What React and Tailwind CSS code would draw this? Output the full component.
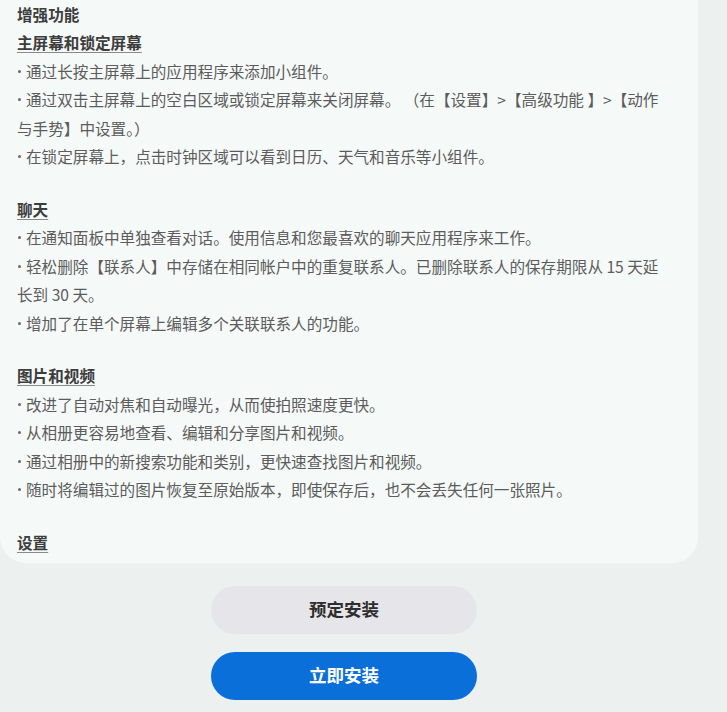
import React from "react";

const sections = [
  {
    title: "主屏幕和锁定屏幕",
    items: [
      ["通过长按主屏幕上的应用程序来添加小组件。"],
      ["通过双击主屏幕上的空白区域或锁定屏幕来关闭屏幕。 （在【设置】>【高级功能 】>【动作", "与手势】中设置。）"],
      ["在锁定屏幕上，点击时钟区域可以看到日历、天气和音乐等小组件。"],
    ],
  },
  {
    title: "聊天",
    items: [
      ["在通知面板中单独查看对话。使用信息和您最喜欢的聊天应用程序来工作。"],
      ["轻松删除【联系人】中存储在相同帐户中的重复联系人。已删除联系人的保存期限从 15 天延", "长到 30 天。"],
      ["增加了在单个屏幕上编辑多个关联联系人的功能。"],
    ],
  },
  {
    title: "图片和视频",
    items: [
      ["改进了自动对焦和自动曝光，从而使拍照速度更快。"],
      ["从相册更容易地查看、编辑和分享图片和视频。"],
      ["通过相册中的新搜索功能和类别，更快速查找图片和视频。"],
      ["随时将编辑过的图片恢复至原始版本，即使保存后，也不会丢失任何一张照片。"],
    ],
  },
];

const Heading = ({ children }) => (
  <div className="h-[28.5px] flex items-center">
    <span className="text-[15.6px] font-bold text-[#3d3d3d] underline underline-offset-[3px] decoration-[#8a8a8a]">
      {children}
    </span>
  </div>
);

export default function App() {
  return (
    <div
      className="w-[727px] h-[712px] overflow-hidden bg-[#ecf1f0]"
      style={{ fontFamily: '"Noto Sans CJK SC", "Noto Sans", sans-serif' }}
    >
      {/* Release notes card */}
      <div className="w-[698px] bg-[#f5f9f8] rounded-b-[26px] pl-[17px] pr-3 pt-0 pb-[6px]">
        <div className="h-[28.5px] flex items-center text-[15.6px] font-bold text-[#3d3d3d]">
          增强功能
        </div>
        {sections.map((s) => (
          <div key={s.title} className="mb-[24px]">
            <Heading>{s.title}</Heading>
            {s.items.map((lines, j) =>
              lines.map((line, k) => (
                <div
                  key={j + "-" + k}
                  className="h-[28.5px] flex items-center whitespace-nowrap text-[15.6px] text-[#5c5c5c]"
                >
                  {k === 0 && (
                    <span className="w-[9px] flex items-center">
                      <span className="w-[3px] h-[3px] rounded-full bg-[#6a6a6a] ml-[1px]" />
                    </span>
                  )}
                  <span>{line}</span>
                </div>
              ))
            )}
          </div>
        ))}
        <Heading>设置</Heading>
      </div>

      {/* Buttons */}
      <div className="flex flex-col gap-[18px] mt-[23px] ml-[211px]">
        <button className="w-[266px] h-[48px] rounded-full bg-[#e6e5e9] text-[17.5px] font-bold text-[#2e2e2e]">
          预定安装
        </button>
        <button className="w-[266px] h-[48px] rounded-full bg-[#0a6fd9] text-[17.5px] font-bold text-white">
          立即安装
        </button>
      </div>
    </div>
  );
}
